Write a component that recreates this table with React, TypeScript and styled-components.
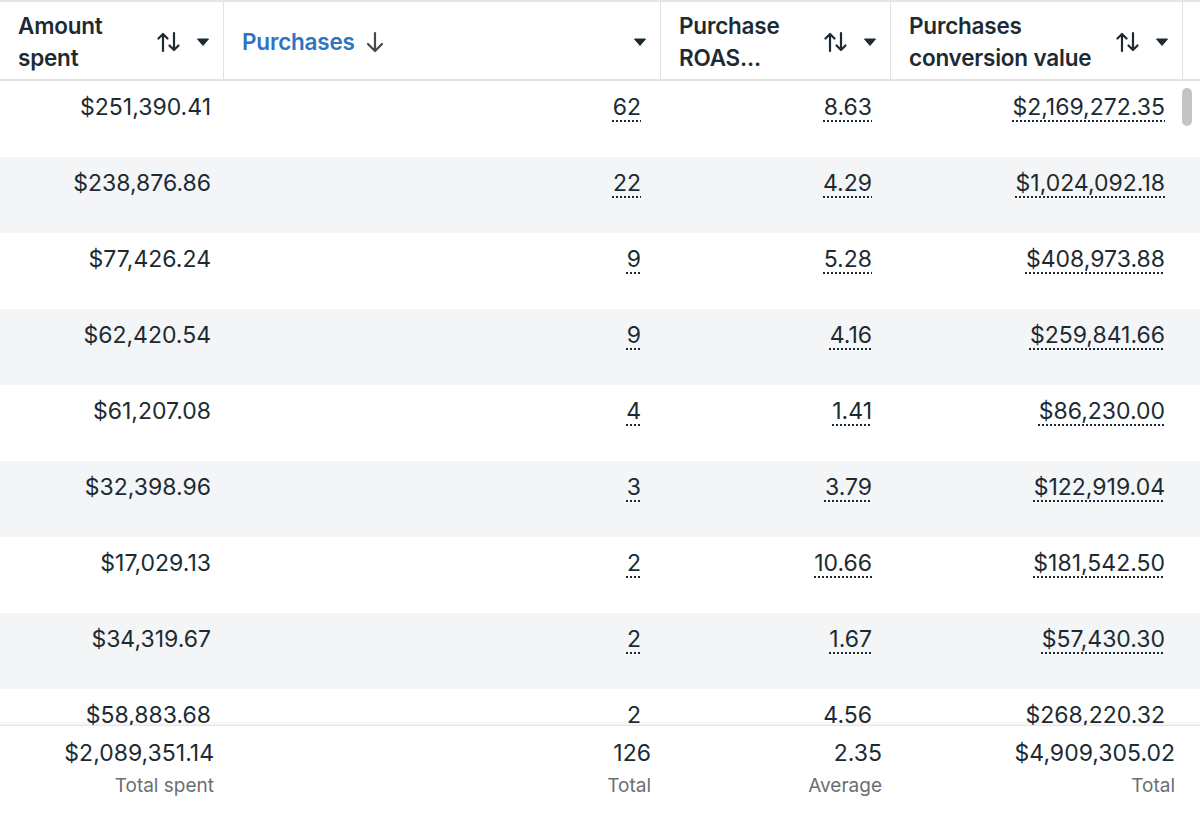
import React from 'react';
import styled, { createGlobalStyle } from 'styled-components';

const GlobalStyle = createGlobalStyle`
  html, body {
    margin: 0;
    padding: 0;
    background: #ffffff;
  }
  body {
    font-family: Inter, 'Noto Sans', 'Liberation Sans', sans-serif;
    color: #1c2b33;
  }
`;

const COLUMNS = '224px 437px 230px 292px 1fr';

const Table = styled.div`
  width: 1200px;
  height: 816px;
  display: flex;
  flex-direction: column;
  overflow: hidden;
  background: #ffffff;
`;

const HeaderRow = styled.div`
  display: grid;
  grid-template-columns: ${COLUMNS};
  height: 81px;
  box-sizing: border-box;
  border-top: 2px solid #e4e6e9;
  border-bottom: 2px solid #e1e3e6;
  flex-shrink: 0;
`;

const HeaderCell = styled.div<{ $last?: boolean }>`
  display: flex;
  align-items: center;
  box-sizing: border-box;
  padding: 2px 14px 0 18px;
  border-right: ${(p) => (p.$last ? 'none' : '1px solid #dfe1e4')};
  gap: 10px;
`;

const HeaderTitle = styled.div<{ $active?: boolean }>`
  flex: 1;
  display: flex;
  align-items: center;
  gap: 10px;
  font-size: 22.5px;
  font-weight: 600;
  line-height: 32px;
  letter-spacing: -0.2px;
  color: ${(p) => (p.$active ? '#2f73c2' : '#1c2b33')};
`;

const IconGroup = styled.div`
  display: flex;
  align-items: center;
  gap: 16px;
  color: #1c2b33;
`;

const Body = styled.div`
  position: relative;
  height: 644px;
  overflow: hidden;
  flex-shrink: 0;
`;

const Row = styled.div<{ $striped: boolean }>`
  display: grid;
  grid-template-columns: ${COLUMNS};
  height: 76px;
  background: ${(p) => (p.$striped ? '#f4f5f6' : '#ffffff')};
`;

const Cell = styled.div<{ $pad: number }>`
  box-sizing: border-box;
  padding: 12px ${(p) => p.$pad}px 0 0;
  text-align: right;
  font-size: 23px;
  line-height: 28px;
  color: #1c2b33;
`;

const Metric = styled.span`
  text-decoration: underline dotted #1c2b33;
  text-decoration-thickness: 2px;
  text-underline-offset: 5px;
`;

const ScrollThumb = styled.div`
  position: absolute;
  top: 7px;
  right: 8px;
  width: 10px;
  height: 38px;
  border-radius: 5px;
  background: #c4c4c4;
`;

const Footer = styled.div`
  display: grid;
  grid-template-columns: ${COLUMNS};
  flex: 1;
  border-top: 1px solid #e4e6e9;
  box-shadow: 0 -2px 4px rgba(0, 0, 0, 0.06);
  position: relative;
  background: #ffffff;
`;

const FooterCell = styled.div<{ $pad: number }>`
  box-sizing: border-box;
  padding: 13px ${(p) => p.$pad}px 0 0;
  text-align: right;
  display: flex;
  flex-direction: column;
  align-items: flex-end;
`;

const FooterValue = styled.div`
  font-size: 23px;
  line-height: 28px;
  color: #1c2b33;
`;

const FooterLabel = styled.div`
  font-size: 19px;
  line-height: 24px;
  margin-top: 7px;
  color: #6a6f73;
`;

const SortIcon = () => (
  <svg width="24" height="22" viewBox="0 0 24 22" fill="none" stroke="#1c2b33" strokeWidth="2.2" strokeLinecap="round" strokeLinejoin="round">
    <path d="M6 20V3M1.5 7.5L6 3l4.5 4.5" />
    <path d="M17 2v17M12.5 14.5L17 19l4.5-4.5" />
  </svg>
);

const Caret = () => (
  <svg width="12" height="8" viewBox="0 0 12 8">
    <path d="M0.5 1h11L6 7.5z" fill="#1c2b33" stroke="#1c2b33" strokeWidth="1" strokeLinejoin="round" />
  </svg>
);

const DownArrow = () => (
  <svg width="20" height="22" viewBox="0 0 20 22" fill="none" stroke="#444950" strokeWidth="2.2" strokeLinecap="round" strokeLinejoin="round">
    <path d="M10 2v18M3 13l7 7 7-7" />
  </svg>
);

const rows = [
  ['$251,390.41', '62', '8.63', '$2,169,272.35'],
  ['$238,876.86', '22', '4.29', '$1,024,092.18'],
  ['$77,426.24', '9', '5.28', '$408,973.88'],
  ['$62,420.54', '9', '4.16', '$259,841.66'],
  ['$61,207.08', '4', '1.41', '$86,230.00'],
  ['$32,398.96', '3', '3.79', '$122,919.04'],
  ['$17,029.13', '2', '10.66', '$181,542.50'],
  ['$34,319.67', '2', '1.67', '$57,430.30'],
  ['$58,883.68', '2', '4.56', '$268,220.32'],
];

const bodyPads = [13, 20, 19, 18];
const footerPads = [10, 10, 9, 8];

const totals = [
  ['$2,089,351.14', 'Total spent'],
  ['126', 'Total'],
  ['2.35', 'Average'],
  ['$4,909,305.02', 'Total'],
];

const App: React.FC = () => (
  <>
    <GlobalStyle />
    <Table>
      <HeaderRow>
        <HeaderCell>
          <HeaderTitle>
            Amount
            <br />
            spent
          </HeaderTitle>
          <IconGroup>
            <SortIcon />
            <Caret />
          </IconGroup>
        </HeaderCell>
        <HeaderCell>
          <HeaderTitle $active>
            Purchases <DownArrow />
          </HeaderTitle>
          <IconGroup>
            <Caret />
          </IconGroup>
        </HeaderCell>
        <HeaderCell>
          <HeaderTitle>
            Purchase
            <br />
            ROAS...
          </HeaderTitle>
          <IconGroup>
            <SortIcon />
            <Caret />
          </IconGroup>
        </HeaderCell>
        <HeaderCell>
          <HeaderTitle>
            Purchases
            <br />
            conversion value
          </HeaderTitle>
          <IconGroup>
            <SortIcon />
            <Caret />
          </IconGroup>
        </HeaderCell>
        <HeaderCell $last />
      </HeaderRow>
      <Body>
        {rows.map((r, i) => (
          <Row key={i} $striped={i % 2 === 1}>
            {r.map((v, j) => (
              <Cell key={j} $pad={bodyPads[j]}>
                {j === 0 ? v : <Metric>{v}</Metric>}
              </Cell>
            ))}
            <div />
          </Row>
        ))}
        <ScrollThumb />
      </Body>
      <Footer>
        {totals.map(([v, l], j) => (
          <FooterCell key={j} $pad={footerPads[j]}>
            <FooterValue>{v}</FooterValue>
            <FooterLabel>{l}</FooterLabel>
          </FooterCell>
        ))}
        <div />
      </Footer>
    </Table>
  </>
);

export default App;
